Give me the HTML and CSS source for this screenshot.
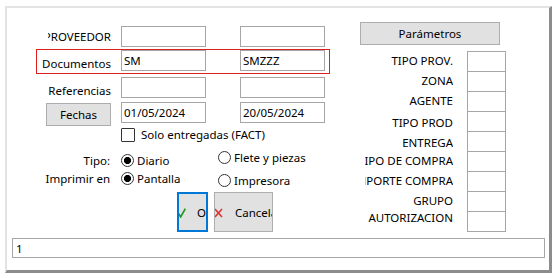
FILE: index.html
```html
<!DOCTYPE html>
<html lang="es">
<head>
<meta charset="utf-8">
<title>Documentos</title>
<link rel="stylesheet" href="styles.css">
</head>
<body>
<div class="window">
  <div class="main">
    <div class="left">
      <div class="row">
        <div class="lbl lbl-clip"><span>PROVEEDOR</span></div>
        <input class="field" type="text" value="">
        <input class="field gap" type="text" value="">
      </div>
      <div class="row row-doc">
        <div class="lbl lbl-low"><span>Documentos</span></div>
        <input class="field" type="text" value="SM">
        <input class="field gap" type="text" value="SMZZZ">
      </div>
      <div class="row row-ref">
        <div class="lbl lbl-low"><span>Referencias</span></div>
        <input class="field" type="text" value="">
        <input class="field gap" type="text" value="">
      </div>
      <div class="row">
        <div class="lbl lbl-btn"><button class="btn btn-fechas" type="button">Fechas</button></div>
        <input class="field" type="text" value="01/05/2024">
        <input class="field gap" type="text" value="20/05/2024">
      </div>
      <div class="check-row">
        <span class="checkbox"></span><span>Solo entregadas (FACT)</span>
      </div>
      <div class="opt-row opt-tipo">
        <div class="opt-lbl">Tipo:</div>
        <div class="opt opt1"><span class="radio on"></span><span>Diario</span></div>
        <div class="opt opt2"><span class="radio"></span><span>Flete y piezas</span></div>
      </div>
      <div class="opt-row opt-impr">
        <div class="opt-lbl">Imprimir en</div>
        <div class="opt opt1"><span class="radio on"></span><span>Pantalla</span></div>
        <div class="opt opt2"><span class="radio"></span><span>Impresora</span></div>
      </div>
      <div class="btn-row">
        <button class="btn btn-ok" type="button">
          <svg class="ico-check" width="8" height="10" viewBox="0 0 8 10"><path d="M0.8 5.6 L2.6 9 L7.4 0.6" fill="none" stroke="#1a9a1a" stroke-width="1.6"/></svg>
          <span class="btn-txt">Ok</span>
        </button>
        <button class="btn btn-cancel" type="button">
          <svg class="ico-x" width="9" height="10" viewBox="0 0 9 10"><path d="M1 1 L8 9 M8 1 L1 9" fill="none" stroke="#e03030" stroke-width="1.5"/></svg>
          <span class="btn-txt">Cancelar</span>
        </button>
      </div>
    </div>
    <div class="right">
      <button class="btn btn-param" type="button">Parámetros</button>
      <div class="params">
        <div class="param"><div class="plabel"><span>TIPO PROV.</span></div><div class="pbox"></div></div>
        <div class="param"><div class="plabel"><span>ZONA</span></div><div class="pbox"></div></div>
        <div class="param"><div class="plabel"><span>AGENTE</span></div><div class="pbox"></div></div>
        <div class="param"><div class="plabel plabel-low"><span>TIPO PROD</span></div><div class="pbox"></div></div>
        <div class="param"><div class="plabel plabel-low"><span>ENTREGA</span></div><div class="pbox"></div></div>
        <div class="param"><div class="plabel"><span>TIPO DE COMPRA</span></div><div class="pbox"></div></div>
        <div class="param"><div class="plabel"><span>IMPORTE COMPRA</span></div><div class="pbox"></div></div>
        <div class="param"><div class="plabel"><span>GRUPO</span></div><div class="pbox"></div></div>
        <div class="param"><div class="plabel plabel-high"><span>AUTORIZACION</span></div><div class="pbox"></div></div>
      </div>
    </div>
  </div>
  <input class="status" type="text" value="1">
</div>
</body>
</html>
```

FILE: styles.css
```css
* { box-sizing: border-box; }

body {
  margin: 0;
  background: #fff;
  font-family: "Noto Sans", "Liberation Sans", sans-serif;
  font-size: 11.5px;
  color: #000;
}

.window {
  margin: 6px 0 0 5px;
  width: 547px;
  height: 267px;
  border-top: 2px solid #e3e3e3;
  border-left: 2px solid #e3e3e3;
  border-right: 3px solid #8c8c8c;
  border-bottom: 3px solid #8c8c8c;
  display: flex;
  flex-direction: column;
}

.main {
  display: flex;
  align-items: flex-start;
  height: 224px;
}

.left {
  margin: 17px 0 0 29px;
  width: 294px;
  display: flex;
  flex-direction: column;
}

.row {
  display: flex;
  align-items: flex-start;
  height: 25px;
  border: 1px solid transparent;
}

.row-doc {
  border-color: #e01e1e;
  margin-top: -1px;
}

.row-ref { margin-top: 2px; }

.lbl {
  width: 84px;
  height: 21px;
  padding: 3px 10px 0 0;
  display: flex;
  justify-content: flex-end;
  white-space: nowrap;
  overflow: hidden;
  line-height: 15px;
  flex: none;
}

.lbl-clip {
  width: 73px;
  margin-left: 11px;
}

.lbl-low { padding-top: 6px; }

.lbl-btn {
  height: auto;
  padding-top: 1px;
  overflow: visible;
}

.field {
  width: 85px;
  height: 21px;
  border: 1px solid #a6a6a6;
  padding: 0 2px;
  margin: 0;
  font: inherit;
  color: #000;
  line-height: 19px;
  background: #fff;
  flex: none;
  outline: none;
}

.gap { margin-left: 34px; }

.btn {
  background: #e1e1e1;
  border: 1px solid #adadad;
  font: inherit;
  color: #000;
  padding: 0;
  margin: 0;
}

.btn-fechas {
  width: 65px;
  height: 23px;
}

.check-row {
  margin-top: 1px;
  height: 15px;
  padding-left: 85px;
  display: flex;
  align-items: center;
  gap: 6px;
  line-height: 15px;
}

.checkbox {
  width: 14px;
  height: 14px;
  border: 1px solid #333;
  border-radius: 1px;
  flex: none;
}

.opt-row {
  display: flex;
  align-items: flex-start;
}

.opt-tipo { margin-top: 9px; height: 17px; }
.opt-impr { height: 19px; }

.opt-lbl {
  width: 85px;
  padding-right: 11px;
  text-align: right;
  line-height: 13px;
  flex: none;
}

.opt {
  display: flex;
  align-items: center;
  gap: 3px;
  line-height: 13px;
  white-space: nowrap;
}

.opt1 { width: 97px; flex: none; }

.opt-tipo .opt-lbl,
.opt-tipo .opt1 { margin-top: 3px; }

.opt-impr .opt-lbl,
.opt-impr .opt1 { margin-top: 4px; }
.opt-impr .opt2 { margin-top: 6px; }

.radio {
  width: 13px;
  height: 13px;
  border: 1px solid #333;
  border-radius: 50%;
  flex: none;
}

.radio.on {
  background: radial-gradient(circle, #000 0, #000 3.2px, #fff 3.9px);
}

.btn-row {
  margin-top: 5px;
  padding-left: 141px;
  display: flex;
  gap: 6px;
}

.btn-ok,
.btn-cancel {
  height: 40px;
  display: flex;
  align-items: center;
  justify-content: flex-start;
  overflow: hidden;
  white-space: nowrap;
}

.btn-ok {
  width: 31px;
  border: 2px solid #0078d7;
}

.btn-cancel { width: 59px; }

.ico-check,
.ico-x {
  flex: none;
  margin-left: -1px;
  margin-top: 1px;
}

.btn-ok .btn-txt { margin-left: 11px; }
.btn-cancel .btn-txt { margin-left: 12px; }

.right {
  margin: 14px 0 0 30px;
  width: 146px;
  display: flex;
  flex-direction: column;
}

.btn-param {
  width: 140px;
  height: 23px;
}

.params {
  margin-top: 6px;
  display: flex;
  flex-direction: column;
}

.param {
  display: flex;
  height: 20px;
}

.plabel {
  width: 88px;
  margin: 0 14px 0 5px;
  padding-top: 3px;
  height: 20px;
  display: flex;
  justify-content: flex-end;
  white-space: nowrap;
  overflow: hidden;
  line-height: 14px;
  flex: none;
}

.plabel-low { padding-top: 5px; }
.plabel-high { padding-top: 0; }

.pbox {
  width: 39px;
  height: 21px;
  border: 1px solid #a6a6a6;
  background: #fff;
  flex: none;
}

.status {
  margin: 6px 0 0 5px;
  width: 533px;
  height: 20px;
  border: 1px solid #a6a6a6;
  padding: 0 3px;
  font: inherit;
  color: #000;
  line-height: 18px;
  outline: none;
}
```
